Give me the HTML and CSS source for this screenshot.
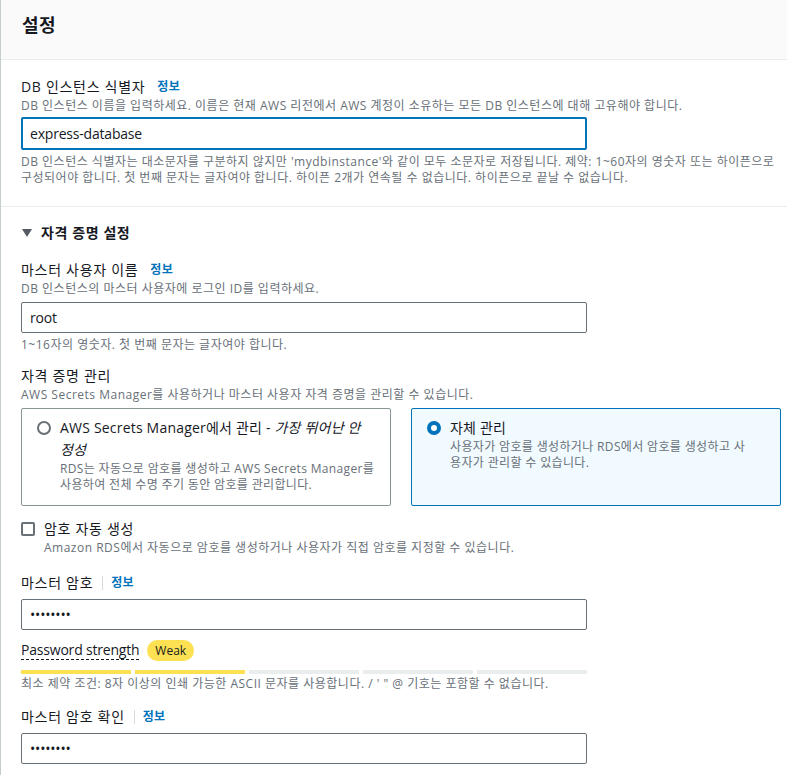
FILE: index.html
```html
<!DOCTYPE html>
<html lang="ko">
<head>
    <meta charset="UTF-8">
    <meta name="viewport" content="width=device-width, initial-scale=1.0">
    <title>설정</title>
    <link rel="stylesheet" href="styles.css">
</head>
<body>
    <div class="panel">
        <div class="panel-header">
            <h2>설정</h2>
        </div>

        <div class="section section-first">
            <div class="field">
                <div class="label-row">
                    <label for="db-id">DB 인스턴스 식별자</label>
                    <a class="info" href="#">정보</a>
                </div>
                <div class="desc">DB 인스턴스 이름을 입력하세요. 이름은 현재 AWS 리전에서 AWS 계정이 소유하는 모든 DB 인스턴스에 대해 고유해야 합니다.</div>
                <input class="text-input focused" id="db-id" type="text" value="express-database">
                <div class="hint hint-lines">DB 인스턴스 식별자는 대소문자를 구분하지 않지만 'mydbinstance'와 같이 모두 소문자로 저장됩니다. 제약: 1~60자의 영숫자 또는 하이픈으로<br>구성되어야 합니다. 첫 번째 문자는 글자여야 합니다. 하이픈 2개가 연속될 수 없습니다. 하이픈으로 끝날 수 없습니다.</div>
            </div>
        </div>

        <div class="section">
            <div class="expander">
                <svg class="caret" viewBox="0 0 10 8" width="10" height="8"><polygon points="0,0 10,0 5,8"/></svg>
                자격 증명 설정
            </div>

            <div class="field field-user">
                <div class="label-row">
                    <label for="master-user">마스터 사용자 이름</label>
                    <a class="info" href="#">정보</a>
                </div>
                <div class="desc">DB 인스턴스의 마스터 사용자에 로그인 ID를 입력하세요.</div>
                <input class="text-input" id="master-user" type="text" value="root">
                <div class="hint">1~16자의 영숫자. 첫 번째 문자는 글자여야 합니다.</div>
            </div>

            <div class="field">
                <div class="label-row">
                    <label>자격 증명 관리</label>
                </div>
                <div class="desc">AWS Secrets Manager를 사용하거나 마스터 사용자 자격 증명을 관리할 수 있습니다.</div>
                <div class="tiles">
                    <div class="tile">
                        <span class="radio"></span>
                        <div class="tile-text">
                            <div class="tile-title">AWS Secrets Manager에서 관리 - <em>가장 뛰어난 안<br>정성</em></div>
                            <div class="tile-desc">RDS는 자동으로 암호를 생성하고 AWS Secrets Manager를<br>사용하여 전체 수명 주기 동안 암호를 관리합니다.</div>
                        </div>
                    </div>
                    <div class="tile selected">
                        <span class="radio checked"></span>
                        <div class="tile-text">
                            <div class="tile-title">자체 관리</div>
                            <div class="tile-desc">사용자가 암호를 생성하거나 RDS에서 암호를 생성하고 사<br>용자가 관리할 수 있습니다.</div>
                        </div>
                    </div>
                </div>
            </div>

            <div class="field">
                <div class="check-row">
                    <span class="checkbox"></span>
                    <span>암호 자동 생성</span>
                </div>
                <div class="desc check-desc">Amazon RDS에서 자동으로 암호를 생성하거나 사용자가 직접 암호를 지정할 수 있습니다.</div>
            </div>

            <div class="field field-pass">
                <div class="label-row">
                    <label for="master-pass">마스터 암호</label>
                    <span class="sep"></span>
                    <a class="info" href="#">정보</a>
                </div>
                <input class="text-input" id="master-pass" type="password" value="12345678">
                <div class="strength">
                    <span class="strength-label">Password strength</span>
                    <span class="badge">Weak</span>
                </div>
                <div class="meter">
                    <span class="on"></span>
                    <span class="on"></span>
                    <span></span>
                    <span></span>
                    <span></span>
                </div>
                <div class="hint hint-tight">최소 제약 조건: 8자 이상의 인쇄 가능한 ASCII 문자를 사용합니다. / ' " @ 기호는 포함할 수 없습니다.</div>
            </div>

            <div class="field field-confirm">
                <div class="label-row">
                    <label for="master-pass2">마스터 암호 확인</label>
                    <span class="sep"></span>
                    <a class="info" href="#">정보</a>
                </div>
                <input class="text-input" id="master-pass2" type="password" value="12345678">
            </div>
        </div>
    </div>
</body>
</html>
```

FILE: styles.css
```css
/* AWS 콘솔 스타일 설정 패널 */
body {
    margin: 0;
    font-family: "Open Sans", "Noto Sans CJK KR", sans-serif;
    font-size: 14px;
    color: #16191f;
    background: #fff;
}
.panel {
    border-left: 1px solid #c6cdd1;
    min-height: 775px;
}
.panel-header {
    background: #fafafa;
    border-bottom: 1px solid #eaeded;
    height: 60px;
    box-sizing: border-box;
    padding: 14px 21px 0;
}
.panel-header h2 {
    margin: 0;
    font-size: 18px;
    line-height: 22px;
    font-weight: 700;
    letter-spacing: 0.5px;
}
.section {
    padding: 15px 7px 0 20px;
}
.section-first {
    padding: 16px 7px 20px 20px;
    border-bottom: 1px solid #eaeded;
}
.field {
    margin-top: 12px;
}
.section-first .field {
    margin-top: 0;
}
.field-user {
    margin-top: 15px;
}
.field-pass {
    margin-top: 16px;
}
.field-confirm {
    margin-top: 14px;
}
.label-row {
    display: flex;
    align-items: center;
    line-height: 22px;
    letter-spacing: 0.7px;
}
.label-row label {
    margin-right: 12px;
}
.info {
    color: #0073bb;
    font-size: 12px;
    font-weight: 700;
    text-decoration: none;
    letter-spacing: 0.3px;
}
.sep {
    width: 1px;
    height: 14px;
    background: #d5dbdb;
    margin: 0 8px 0 -3px;
}
.desc,
.hint {
    font-size: 12px;
    line-height: 16px;
    color: #687078;
    letter-spacing: 0.5px;
}
.hint {
    margin-top: 4px;
}
.hint-lines {
    white-space: nowrap;
}
.hint-tight {
    margin-top: 2px;
}
.text-input {
    display: block;
    width: 566px;
    height: 31px;
    box-sizing: border-box;
    margin-top: 5px;
    padding: 0 8px;
    font: inherit;
    font-size: 14px;
    letter-spacing: -0.2px;
    color: #16191f;
    border: 1px solid #687078;
    border-radius: 2px;
    background: #fff;
    outline: none;
}
.text-input.focused {
    height: 33px;
    margin-top: 3px;
    padding: 0 7px;
    border: 2px solid #0073bb;
}
.expander {
    display: flex;
    align-items: center;
    font-weight: 700;
    line-height: 22px;
    letter-spacing: 0.6px;
}
.caret {
    fill: #545b64;
    margin: 0 9px 0 1px;
}
.tiles {
    display: grid;
    grid-template-columns: 370px 370px;
    column-gap: 20px;
    margin-top: 5px;
}
.tile {
    display: flex;
    border: 1px solid #879596;
    border-radius: 2px;
    padding: 8px 16px 12px 15px;
}
.tile.selected {
    border-color: #0073bb;
    background: #f1faff;
}
.radio {
    flex: none;
    width: 14px;
    height: 14px;
    box-sizing: border-box;
    border: 2px solid #687078;
    border-radius: 50%;
    margin: 4px 9px 0 0;
    background: #fff;
}
.radio.checked {
    border: 4px solid #0073bb;
}
.tile-title {
    line-height: 22px;
    white-space: nowrap;
    letter-spacing: 0.2px;
}
.tile-title em {
    font-style: italic;
}
.tile-desc {
    font-size: 12px;
    line-height: 16px;
    color: #687078;
    white-space: nowrap;
    letter-spacing: 0.35px;
}
.check-row {
    display: flex;
    align-items: center;
    line-height: 22px;
    letter-spacing: 0.7px;
}
.checkbox {
    width: 14px;
    height: 14px;
    box-sizing: border-box;
    border: 2px solid #687078;
    border-radius: 2px;
    margin: 0 9px 0 0;
}
.check-desc {
    margin-left: 23px;
}
.strength {
    display: flex;
    align-items: center;
    margin-top: 10px;
    height: 21px;
}
.strength-label {
    line-height: 18px;
    letter-spacing: -0.2px;
    border-bottom: 1px dashed #16191f;
    margin-right: 8px;
}
.badge {
    background: #fde152;
    color: #16191f;
    font-size: 12px;
    line-height: 21px;
    padding: 0 8px;
    border-radius: 11px;
}
.meter {
    display: flex;
    gap: 4px;
    width: 566px;
    margin-top: 9px;
}
.meter span {
    flex: 1;
    height: 4px;
    background: #eaeded;
}
.meter span.on {
    background: #fde152;
}
```
